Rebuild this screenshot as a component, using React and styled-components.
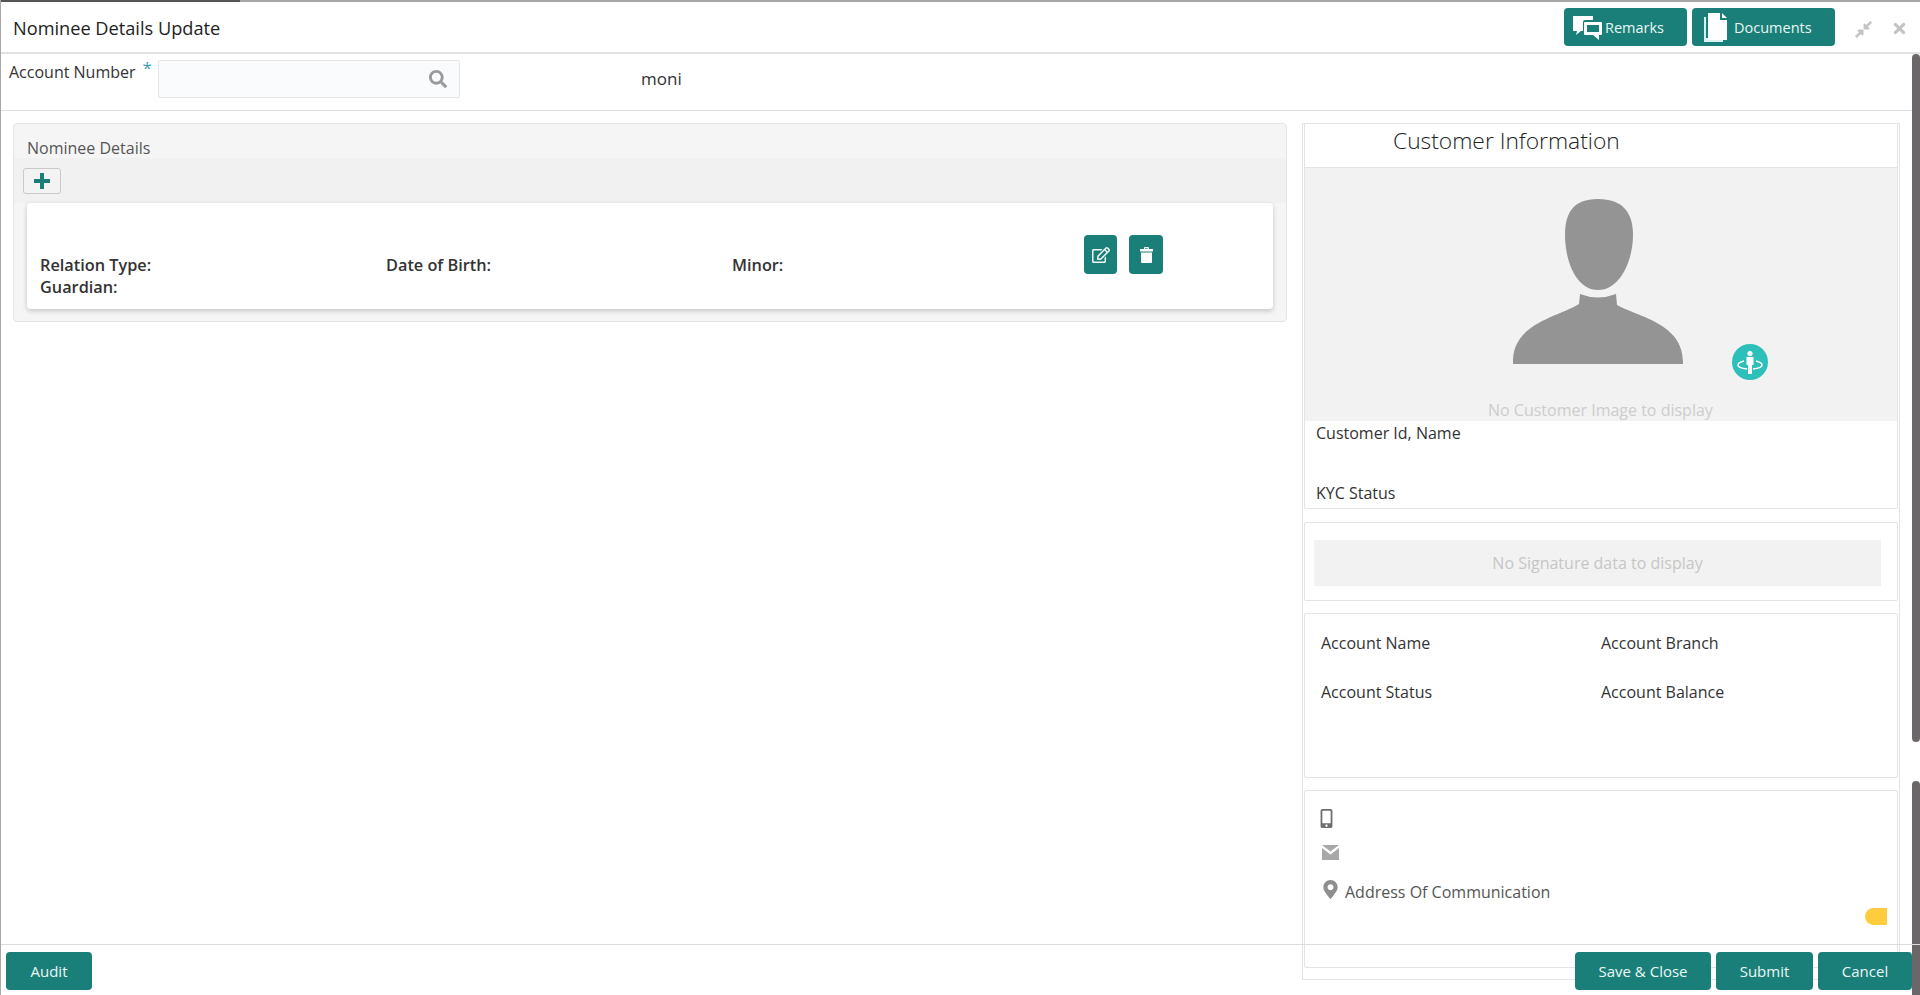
import React from 'react'
import styled, { createGlobalStyle } from 'styled-components'
import { FaSearch, FaRegEdit, FaCompressAlt, FaTimes, FaMapMarkerAlt, FaMobileAlt } from 'react-icons/fa'

const teal = '#1b7f79'

const GlobalStyle = createGlobalStyle`
  html, body { margin: 0; padding: 0; background: #fff; height: 100%; overflow: hidden; }
  body { font-family: "Open Sans", "Noto Sans", "Liberation Sans", sans-serif; color: #2c2c2c; }
  * { box-sizing: border-box; }
`

const Page = styled.div`
  position: relative;
  width: 1920px;
  height: 995px;
  display: flex;
  flex-direction: column;
  border-left: 1px solid #a8a8a8;
  overflow: hidden;
`
const TopRule = styled.div`
  display: flex;
  height: 2px;
  flex: none;
  background: #a6a6a6;
`
const TopRuleActive = styled.div`
  width: 239px;
  background: #555;
`
const Header = styled.header`
  flex: none;
  height: 52px;
  display: flex;
  align-items: flex-start;
  border-bottom: 2px solid #e2e2e2;
  padding: 6px 12px 0 12px;
`
const Title = styled.h1`
  margin: 0;
  flex: 1;
  font-size: 18.2px;
  font-weight: 400;
  line-height: 40px;
  color: #222;
`
const HeaderButton = styled.button`
  width: ${p => p.$width}px;
  height: 38px;
  margin-right: 5px;
  border: 0;
  border-radius: 4px;
  background: ${teal};
  color: #e8f6f5;
  font: 400 14.5px "Open Sans", sans-serif;
  display: flex;
  align-items: center;
  gap: ${p => p.$gap}px;
  padding: 0 0 0 ${p => p.$pad}px;
  white-space: nowrap;
`
const WindowTool = styled.span`
  display: flex;
  color: #c4c4c4;
  font-size: ${p => p.$size}px;
  margin: 12px 0 0 ${p => p.$left}px;
`
const Body = styled.div`
  flex: 1;
  display: flex;
  min-height: 0;
`
const Content = styled.main`
  flex: 1;
  min-width: 0;
`
const ScrollTrack = styled.div`
  flex: none;
  width: 8px;
  display: flex;
  flex-direction: column;
  gap: 39px;
`
const ScrollThumb = styled.div`
  height: ${p => p.$height}px;
  flex: none;
  border-radius: 4px;
  background: #6b6669;
`
const AccountRow = styled.section`
  height: 57px;
  display: flex;
  align-items: flex-start;
  border-bottom: 1px solid #e0e0e0;
  padding: 6px 0 0 8px;
`
const FieldLabel = styled.label`
  font-size: 16px;
  line-height: 24px;
  color: #333;
  width: 149px;
  flex: none;
`
const Required = styled.span`
  color: #3a9fc0;
  font-size: 17px;
  margin-left: 7px;
  position: relative;
  top: -4px;
`
const InputBox = styled.div`
  width: 302px;
  height: 38px;
  display: flex;
  align-items: center;
  justify-content: flex-end;
  padding-right: 12px;
  background: #fafbfc;
  border: 1px solid #e6e6e6;
  border-radius: 2px;
  color: #9a9a9a;
  font-size: 18px;
`
const AccountName = styled.span`
  margin-left: 181px;
  font-size: 17px;
  font-weight: 500;
  line-height: 38px;
  color: #333;
`
const Workspace = styled.div`
  display: flex;
  align-items: flex-start;
  gap: 15px;
  padding: 12px 0 0 12px;
`
const NomineePanel = styled.section`
  width: 1274px;
  height: 199px;
  flex: none;
  background: #f5f5f5;
  border: 1px solid #e4e4e4;
  border-radius: 4px;
  display: flex;
  flex-direction: column;
`
const PanelTitle = styled.h2`
  margin: 0;
  height: 34px;
  flex: none;
  padding: 13px 0 0 13px;
  font-size: 16px;
  font-weight: 400;
  line-height: 22px;
  color: #555;
`
const PanelTools = styled.div`
  height: 45px;
  flex: none;
  background: #f1f1f1;
  padding: 10px 0 0 9px;
`
const AddButton = styled.button`
  display: flex;
  align-items: center;
  justify-content: center;
  width: 38px;
  height: 26px;
  padding: 0;
  background: #f3f3f3;
  border: 1px solid #c9c9c9;
  border-radius: 3px;
`
const NomineeCard = styled.article`
  width: 1246px;
  height: 106px;
  flex: none;
  margin-left: 13px;
  display: flex;
  align-items: flex-start;
  background: #fff;
  border-radius: 4px;
  box-shadow: 0 2px 5px rgba(0, 0, 0, 0.2);
  padding: 51px 0 0 13px;
`
const FieldGrid = styled.div`
  width: 1038px;
  flex: none;
  display: grid;
  grid-template-columns: repeat(3, 346px);
`
const FieldName = styled.strong`
  font-size: 16.3px;
  font-weight: 600;
  line-height: 22px;
  color: #333;
`
const CardActions = styled.div`
  display: flex;
  gap: 12px;
  margin: -19px 0 0 6px;
`
const IconButton = styled.button`
  width: ${p => p.$width}px;
  height: 39px;
  display: flex;
  align-items: center;
  justify-content: center;
  padding: 0;
  border: 0;
  border-radius: 4px;
  background: ${teal};
  color: #eef8f7;
  font-size: 18px;
`
const CustomerBox = styled.aside`
  width: 598px;
  height: 857px;
  flex: none;
  border: 1px solid #e4e4e4;
  padding: 0 1px;
  display: flex;
  flex-direction: column;
  gap: 12px;
`
const CustomerCard = styled.div`
  flex: none;
  height: 385px;
  border: 1px solid #e4e4e4;
  border-top: 0;
  border-radius: 0 0 2px 2px;
  margin-bottom: 1px;
`
const CustomerTitle = styled.h2`
  margin: 0;
  height: 44px;
  padding-left: 88px;
  font-size: 22.8px;
  font-weight: 300;
  line-height: 33px;
  color: #222;
  border-bottom: 1px solid #e4e4e4;
`
const PhotoFrame = styled.div`
  position: relative;
  height: 253px;
  background: #f2f2f2;
  display: flex;
  flex-direction: column;
  align-items: center;
  padding: 31px 6px 0 0;
`
const PhotoNote = styled.span`
  position: absolute;
  left: 183px;
  bottom: 0;
  font-size: 16px;
  line-height: 22px;
  color: #cdcdcd;
  white-space: nowrap;
`
const RotateBadge = styled.span`
  position: absolute;
  left: 427px;
  top: 176px;
  display: flex;
`
const CustomerFacts = styled.div`
  display: flex;
  flex-direction: column;
  gap: 38px;
  padding: 1px 0 0 11px;
`
const Fact = styled.span`
  font-size: 16px;
  line-height: 22px;
  color: #333;
`
const SignatureCard = styled.div`
  flex: none;
  height: 79px;
  border: 1px solid #e4e4e4;
  border-radius: 2px;
  padding: 17px 0 0 9px;
`
const SignatureNote = styled.div`
  width: 567px;
  height: 46px;
  background: #f2f2f2;
  color: #c6c6c6;
  font-size: 16px;
  line-height: 46px;
  text-align: center;
`
const AccountCard = styled.div`
  flex: none;
  height: 165px;
  border: 1px solid #e4e4e4;
  border-radius: 2px;
  padding: 18px 0 0 16px;
  display: grid;
  grid-template-columns: 280px 1fr;
  grid-auto-rows: 49px;
`
const ContactCard = styled.div`
  flex: none;
  height: 178px;
  border: 1px solid #e4e4e4;
  border-radius: 2px;
  position: relative;
  padding: 10px 0 0 0;
`
const ContactLine = styled.div`
  display: flex;
  align-items: center;
  gap: 5px;
  height: 34px;
  padding-left: ${p => p.$indent}px;
  margin-top: ${p => p.$top || 0}px;
  font-size: 19px;
  color: ${p => p.$tone};
`
const ContactText = styled.span`
  font-size: 16px;
  color: #555;
  position: relative;
  top: 3px;
`
const Flag = styled.span`
  position: absolute;
  right: 10px;
  top: 117px;
  width: 22px;
  height: 17px;
  background: #ffcc3d;
  border-radius: 9px 0 0 9px;
`
const Footer = styled.footer`
  position: absolute;
  left: 0;
  right: 0;
  bottom: 0;
  height: 51px;
  border-top: 1px solid #dcdcdc;
  padding: 7px 8px 0 5px;
  display: flex;
  gap: 5px;
`
const FooterButton = styled.button`
  width: ${p => p.$width}px;
  height: 38px;
  border: 0;
  border-radius: 4px;
  background: ${teal};
  color: #eaf7f6;
  font: 400 15px "Open Sans", sans-serif;
  padding: 0;
  margin-left: ${p => p.$push ? 'auto' : '0'};
`

const RemarksIcon = () => (
  <svg width="29" height="25" viewBox="0 0 29 25">
    <path fill="#fff" d="M0 1h20v4h-8a2 2 0 0 0-2 2v9H8l-5 4 1-4H0z" />
    <path fill="#fff" d="M12 7h16a1 1 0 0 1 1 1v11a1 1 0 0 1-1 1h-2v5l-6-5h-8a1 1 0 0 1-1-1V8a1 1 0 0 1 1-1zm2 3v7h12v-7z" />
  </svg>
)

const DocumentsIcon = () => (
  <svg width="23" height="29" viewBox="0 0 23 29">
    <path fill="#d8f0ee" d="M0 4h2v21h17v4H0z" />
    <path fill="#fff" d="M4 0h12v7h7v20H4zM18 0l5 5h-5z" />
  </svg>
)

const PlusIcon = () => (
  <svg width="16" height="16" viewBox="0 0 16 16">
    <path fill={teal} d="M6 0h4v6h6v4h-6v6H6v-6H0V6h6z" />
  </svg>
)

const TrashIcon = () => (
  <svg width="13" height="16" viewBox="0 0 13 16">
    <path fill="#fff" d="M4 2V1a1 1 0 0 1 1-1h3a1 1 0 0 1 1 1v1h4v2.500H0V2zm1.300 0h2.400V1.200H5.300zM1 5.500h11V15a1 1 0 0 1-1 1H2a1 1 0 0 1-1-1z" />
  </svg>
)

const MailIcon = () => (
  <svg width="17" height="15" viewBox="0 0 17 15">
    <path fill="#a8a8a8" d="M0 0h17L8.500 6.500zM0 3l8.500 6.500L17 3v12H0z" />
  </svg>
)

const Silhouette = () => (
  <svg width="170" height="165" viewBox="0 0 170 165" style={{ filter: 'blur(0.5px)' }}>
    <path fill="#949494" d="M85 0C60 0 52 14 52 36c0 24 10 55 33 55s35-31 35-55C120 14 110 0 85 0z" />
    <path fill="#949494" d="M67 95q18 7 36 0l1 11c21 12 66 18 66 57v2H0v-5c2-36 45-42 66-55z" />
  </svg>
)

const RotateIcon = () => (
  <svg width="36" height="36" viewBox="0 0 36 36">
    <circle cx="18" cy="18" r="18" fill="#2dbfb9" />
    <circle cx="18" cy="9.500" r="2.600" fill="#fff" />
    <path fill="#fff" d="M14.500 13h7v8H20v9h-4v-9h-1.500z" />
    <path fill="none" stroke="#fff" strokeWidth="1.500" d="M12 17c-4 1-6 2.500-6 4 0 2 4 3.500 9 4M24 17c4 1 6 2.500 6 4 0 2-4 3.500-9 4" />
  </svg>
)

export default function App() {
  return (
    <Page>
      <GlobalStyle />
      <TopRule><TopRuleActive /></TopRule>
      <Header>
        <Title>Nominee Details Update</Title>
        <HeaderButton $width={123} $pad={9} $gap={3}><RemarksIcon />Remarks</HeaderButton>
        <HeaderButton $width={143} $pad={12} $gap={7}><DocumentsIcon />Documents</HeaderButton>
        <WindowTool $size={19} $left={14}><FaCompressAlt /></WindowTool>
        <WindowTool $size={17} $left={18}><FaTimes /></WindowTool>
      </Header>
      <Body>
        <Content>
          <AccountRow>
            <FieldLabel>Account Number<Required>*</Required></FieldLabel>
            <InputBox><FaSearch /></InputBox>
            <AccountName>moni</AccountName>
          </AccountRow>
          <Workspace>
            <NomineePanel>
              <PanelTitle>Nominee Details</PanelTitle>
              <PanelTools>
                <AddButton><PlusIcon /></AddButton>
              </PanelTools>
              <NomineeCard>
                <FieldGrid>
                  <FieldName>Relation Type:</FieldName>
                  <FieldName>Date of Birth:</FieldName>
                  <FieldName>Minor:</FieldName>
                  <FieldName>Guardian:</FieldName>
                </FieldGrid>
                <CardActions>
                  <IconButton $width={33}><FaRegEdit /></IconButton>
                  <IconButton $width={34}><TrashIcon /></IconButton>
                </CardActions>
              </NomineeCard>
            </NomineePanel>
            <CustomerBox>
              <CustomerCard>
                <CustomerTitle>Customer Information</CustomerTitle>
                <PhotoFrame>
                  <Silhouette />
                  <RotateBadge><RotateIcon /></RotateBadge>
                  <PhotoNote>No Customer Image to display</PhotoNote>
                </PhotoFrame>
                <CustomerFacts>
                  <Fact>Customer Id, Name</Fact>
                  <Fact>KYC Status</Fact>
                </CustomerFacts>
              </CustomerCard>
              <SignatureCard>
                <SignatureNote>No Signature data to display</SignatureNote>
              </SignatureCard>
              <AccountCard>
                <Fact>Account Name</Fact>
                <Fact>Account Branch</Fact>
                <Fact>Account Status</Fact>
                <Fact>Account Balance</Fact>
              </AccountCard>
              <ContactCard>
                <ContactLine $indent={12} $tone="#6f6f6f"><FaMobileAlt /></ContactLine>
                <ContactLine $indent={17} $tone="#a8a8a8"><MailIcon /></ContactLine>
                <ContactLine $indent={16} $top={3} $tone="#8e8e8e"><FaMapMarkerAlt /><ContactText>Address Of Communication</ContactText></ContactLine>
                <Flag />
              </ContactCard>
            </CustomerBox>
          </Workspace>
        </Content>
        <ScrollTrack>
          <ScrollThumb $height={688} />
          <ScrollThumb $height={240} />
        </ScrollTrack>
      </Body>
      <Footer>
        <FooterButton $width={86}>Audit</FooterButton>
        <FooterButton $width={136} $push>Save &amp; Close</FooterButton>
        <FooterButton $width={97}>Submit</FooterButton>
        <FooterButton $width={94}>Cancel</FooterButton>
      </Footer>
    </Page>
  )
}
